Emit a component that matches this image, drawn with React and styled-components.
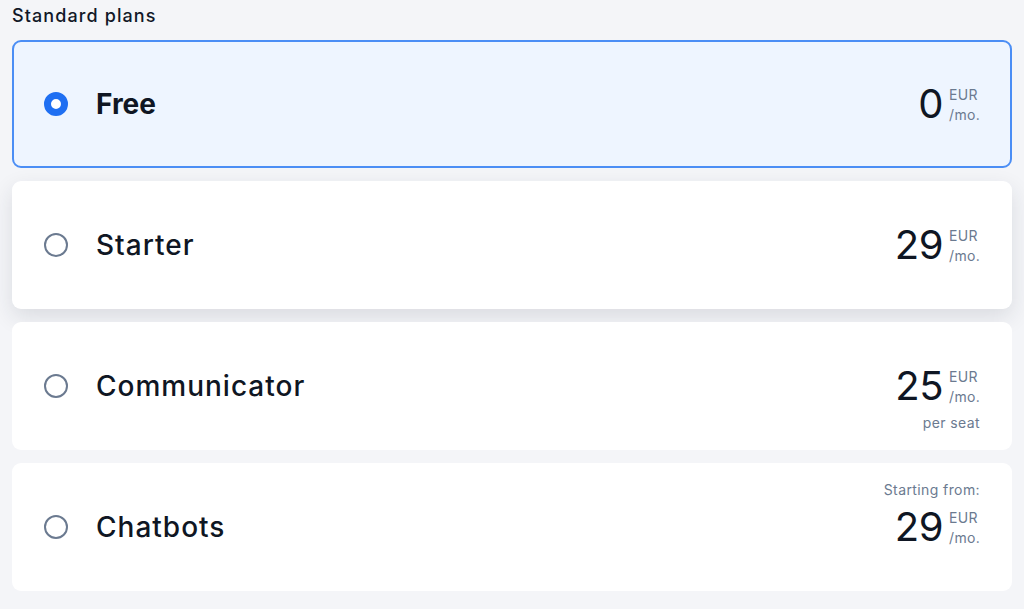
import React from 'react';
import styled, { createGlobalStyle } from 'styled-components';

const GlobalStyle = createGlobalStyle`
  html, body {
    margin: 0;
    padding: 0;
    background: #f4f5f8;
    font-family: 'Inter', 'Noto Sans', sans-serif;
    color: #0f1623;
  }
`;

const Page = styled.div`
  padding: 4px 12px 18px 12px;
`;

const Heading = styled.h2`
  margin: 0 0 12px 0;
  font-size: 18px;
  font-weight: 500;
  line-height: 24px;
  letter-spacing: 1.1px;
  color: #111827;
`;

const List = styled.div`
  display: flex;
  flex-direction: column;
  gap: 13px;
`;

const Card = styled.label`
  display: flex;
  align-items: center;
  box-sizing: border-box;
  height: 128px;
  padding: 0 30px 0 30px;
  border-radius: 9px;
  background: ${p => (p.$selected ? '#eef5ff' : '#ffffff')};
  border: 2px solid ${p => (p.$selected ? '#4b8ef5' : 'transparent')};
  box-shadow: ${p => (p.$raised ? '0 8px 22px rgba(30, 40, 60, 0.12)' : 'none')};
  cursor: pointer;
`;

const Radio = styled.span`
  flex: none;
  box-sizing: border-box;
  width: 24px;
  height: 24px;
  border-radius: 50%;
  border: ${p => (p.$checked ? '7px solid #1f6ff2' : '2px solid #6b7a90')};
  background: #fff;
`;

const Name = styled.span`
  margin-left: 28px;
  flex: 1;
  font-size: 28px;
  font-weight: ${p => (p.$selected ? 700 : 500)};
  letter-spacing: ${p => (p.$selected ? '0' : '1px')};
`;

const PriceBlock = styled.div`
  display: flex;
  flex-direction: column;
  align-items: flex-end;
`;

const Note = styled.span`
  font-size: 14px;
  line-height: 20px;
  letter-spacing: 0.4px;
  color: #6b7a90;
  margin: ${p => (p.$above ? '-26px 0 6px 0' : '6px 0 -26px 0')};
`;

const PriceRow = styled.div`
  display: flex;
  align-items: flex-start;
  gap: 6px;
`;

const Amount = styled.span`
  font-size: 40px;
  line-height: 42px;
  font-weight: 400;
  letter-spacing: -0.5px;
  color: #0f1623;
`;

const Unit = styled.span`
  display: flex;
  flex-direction: column;
  font-size: 14px;
  line-height: 20px;
  letter-spacing: 0.3px;
  color: #6b7a90;
  padding-top: 2px;
`;

const plans = [
  { name: 'Free', price: '0', selected: true },
  { name: 'Starter', price: '29', raised: true },
  { name: 'Communicator', price: '25', after: 'per seat' },
  { name: 'Chatbots', price: '29', before: 'Starting from:' },
];

export default function App() {
  return (
    <>
      <GlobalStyle />
      <Page>
        <Heading>Standard plans</Heading>
        <List>
          {plans.map(plan => (
            <Card key={plan.name} $selected={plan.selected} $raised={plan.raised}>
              <Radio $checked={plan.selected} />
              <Name $selected={plan.selected}>{plan.name}</Name>
              <PriceBlock>
                {plan.before && <Note $above>{plan.before}</Note>}
                <PriceRow>
                  <Amount>{plan.price}</Amount>
                  <Unit>
                    <span>EUR</span>
                    <span>/mo.</span>
                  </Unit>
                </PriceRow>
                {plan.after && <Note>{plan.after}</Note>}
              </PriceBlock>
            </Card>
          ))}
        </List>
      </Page>
    </>
  );
}
